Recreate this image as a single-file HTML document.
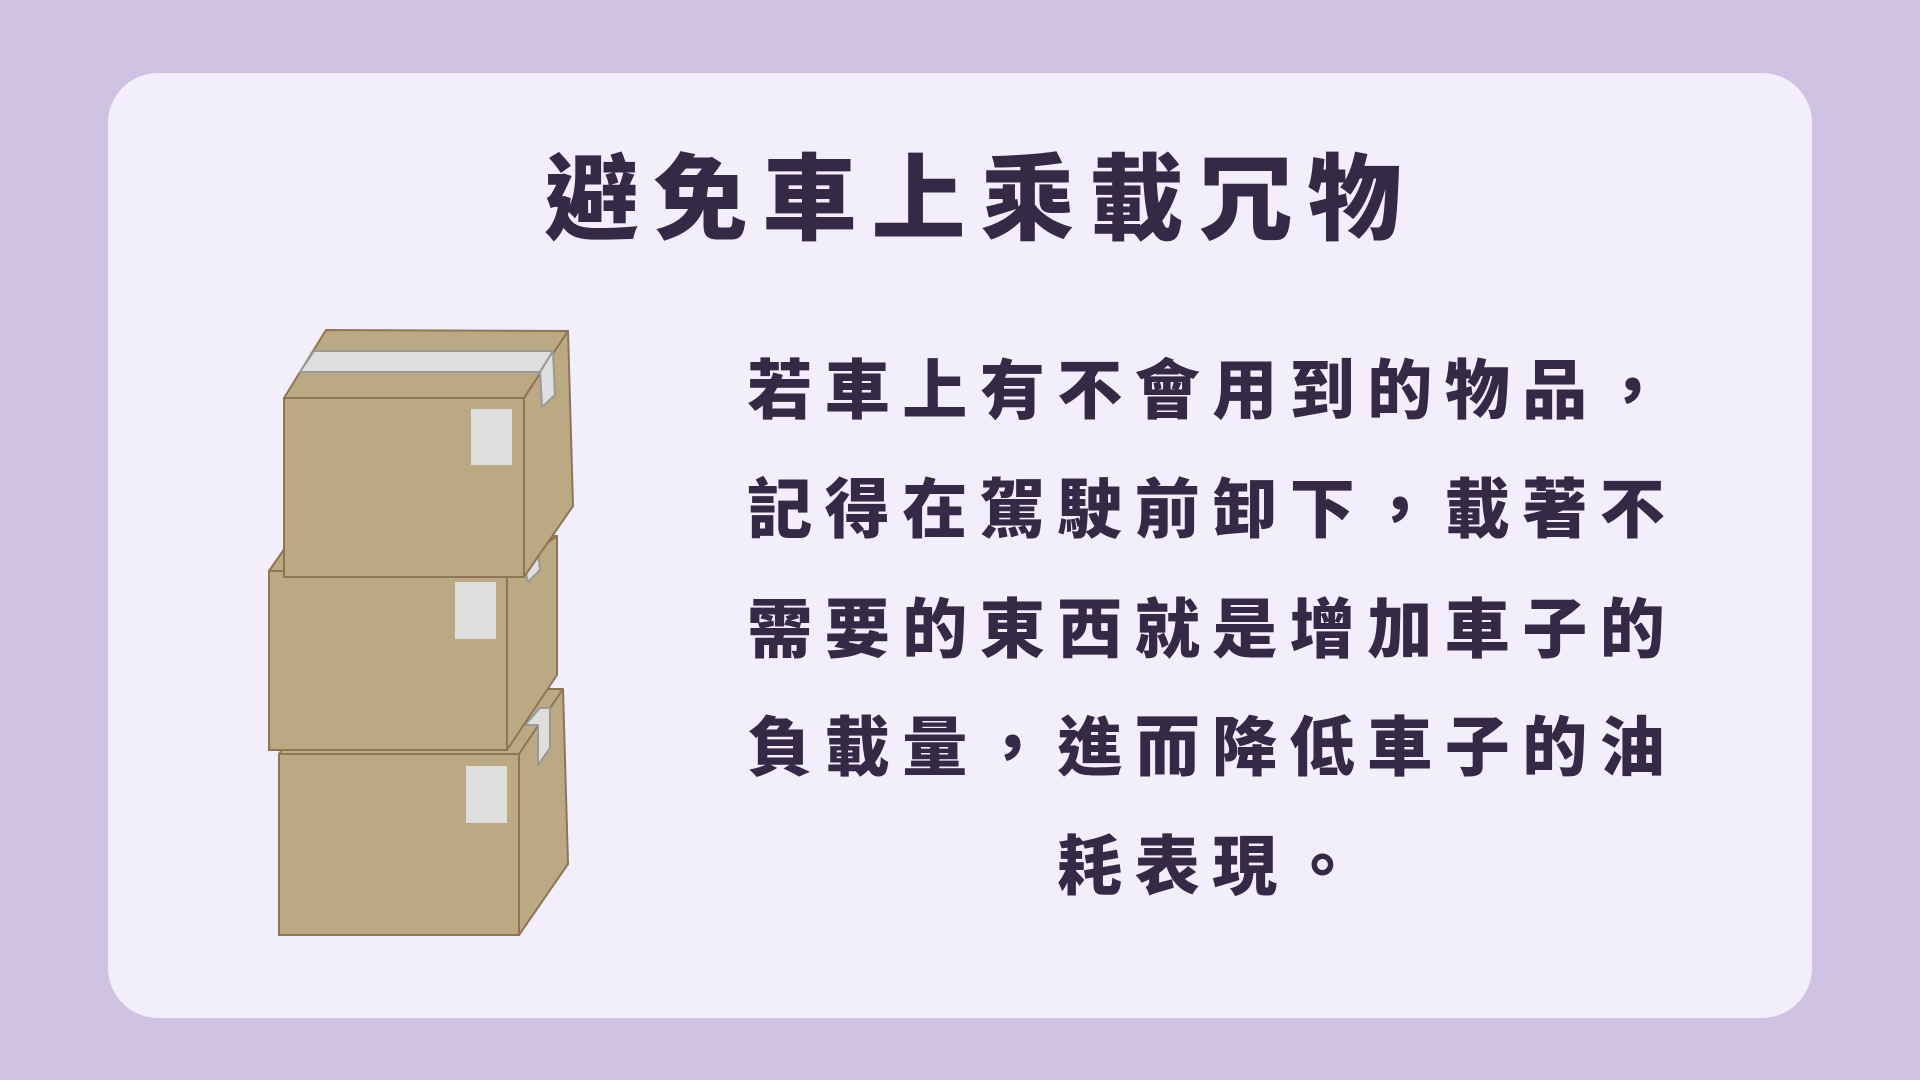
<!DOCTYPE html>
<html><head><meta charset="utf-8"><style>
html,body{margin:0;padding:0;}
body{width:1920px;height:1080px;background:#d0c2e2;position:relative;overflow:hidden;font-family:"Liberation Sans","Noto Sans CJK TC",sans-serif;}
.card{position:absolute;left:108px;top:73px;width:1704px;height:945px;background:#f3eefb;border-radius:50px;}
.title{position:absolute;left:973px;top:142px;transform:translateX(-50%);white-space:nowrap;font-size:94px;font-weight:900;color:#342a45;letter-spacing:15px;padding-left:15px;line-height:116px;}
.line{position:absolute;left:1206px;transform:translateX(-50%);white-space:nowrap;font-size:65px;font-weight:900;color:#342a45;letter-spacing:12.5px;padding-left:12.5px;line-height:80px;}
svg{position:absolute;left:0;top:0;}
</style></head><body>
<div class="card"></div>
<div class="title">避免車上乘載冗物</div>
<div class="line" style="top:351px">若車上有不會用到的物品，</div>
<div class="line" style="top:470px">記得在駕駛前卸下，載著不</div>
<div class="line" style="top:590px">需要的東西就是增加車子的</div>
<div class="line" style="top:708px">負載量，進而降低車子的油</div>
<div class="line" style="top:827px">耗表現。</div>
<svg width="1920" height="1080" viewBox="0 0 1920 1080">
<g stroke="#8f7552" stroke-width="2" stroke-linejoin="round" fill="#bba983">
<polygon points="279,754 323,689 563,689 519,754"/>
<polygon points="519,754 563,689 568,864 519,935"/>
<rect x="279" y="754" width="240" height="181"/>
<polygon points="525,725 540,708 550,708 550,748 538,765 538,725" fill="#dedede" stroke="#999"/>
<rect x="466" y="766" width="41" height="57" fill="#dedede" stroke="none"/>
<polygon points="269,571 285,548 520,536 557,536 507,571"/>
<polygon points="507,571 557,536 557,675 507,750"/>
<rect x="269" y="571" width="238" height="179"/>
<rect x="455" y="582" width="41" height="57" fill="#dedede" stroke="none"/>
<polygon points="525,570 538,552 540,570 528,582" fill="#dedede" stroke="#999"/>
<polygon points="284,398 326,330 568,331 524,398"/>
<polygon points="524,398 568,331 573,506 524,577"/>
<rect x="284" y="398" width="240" height="179"/>
<polygon points="300,372 314,351 553,351 540,372" fill="#dedede" stroke="#999"/>
<polygon points="540,372 553,351 555,395 542,407" fill="#dedede" stroke="#999"/>
<rect x="471" y="409" width="41" height="56" fill="#dedede" stroke="none"/>
</g>
</svg>
</body></html>
